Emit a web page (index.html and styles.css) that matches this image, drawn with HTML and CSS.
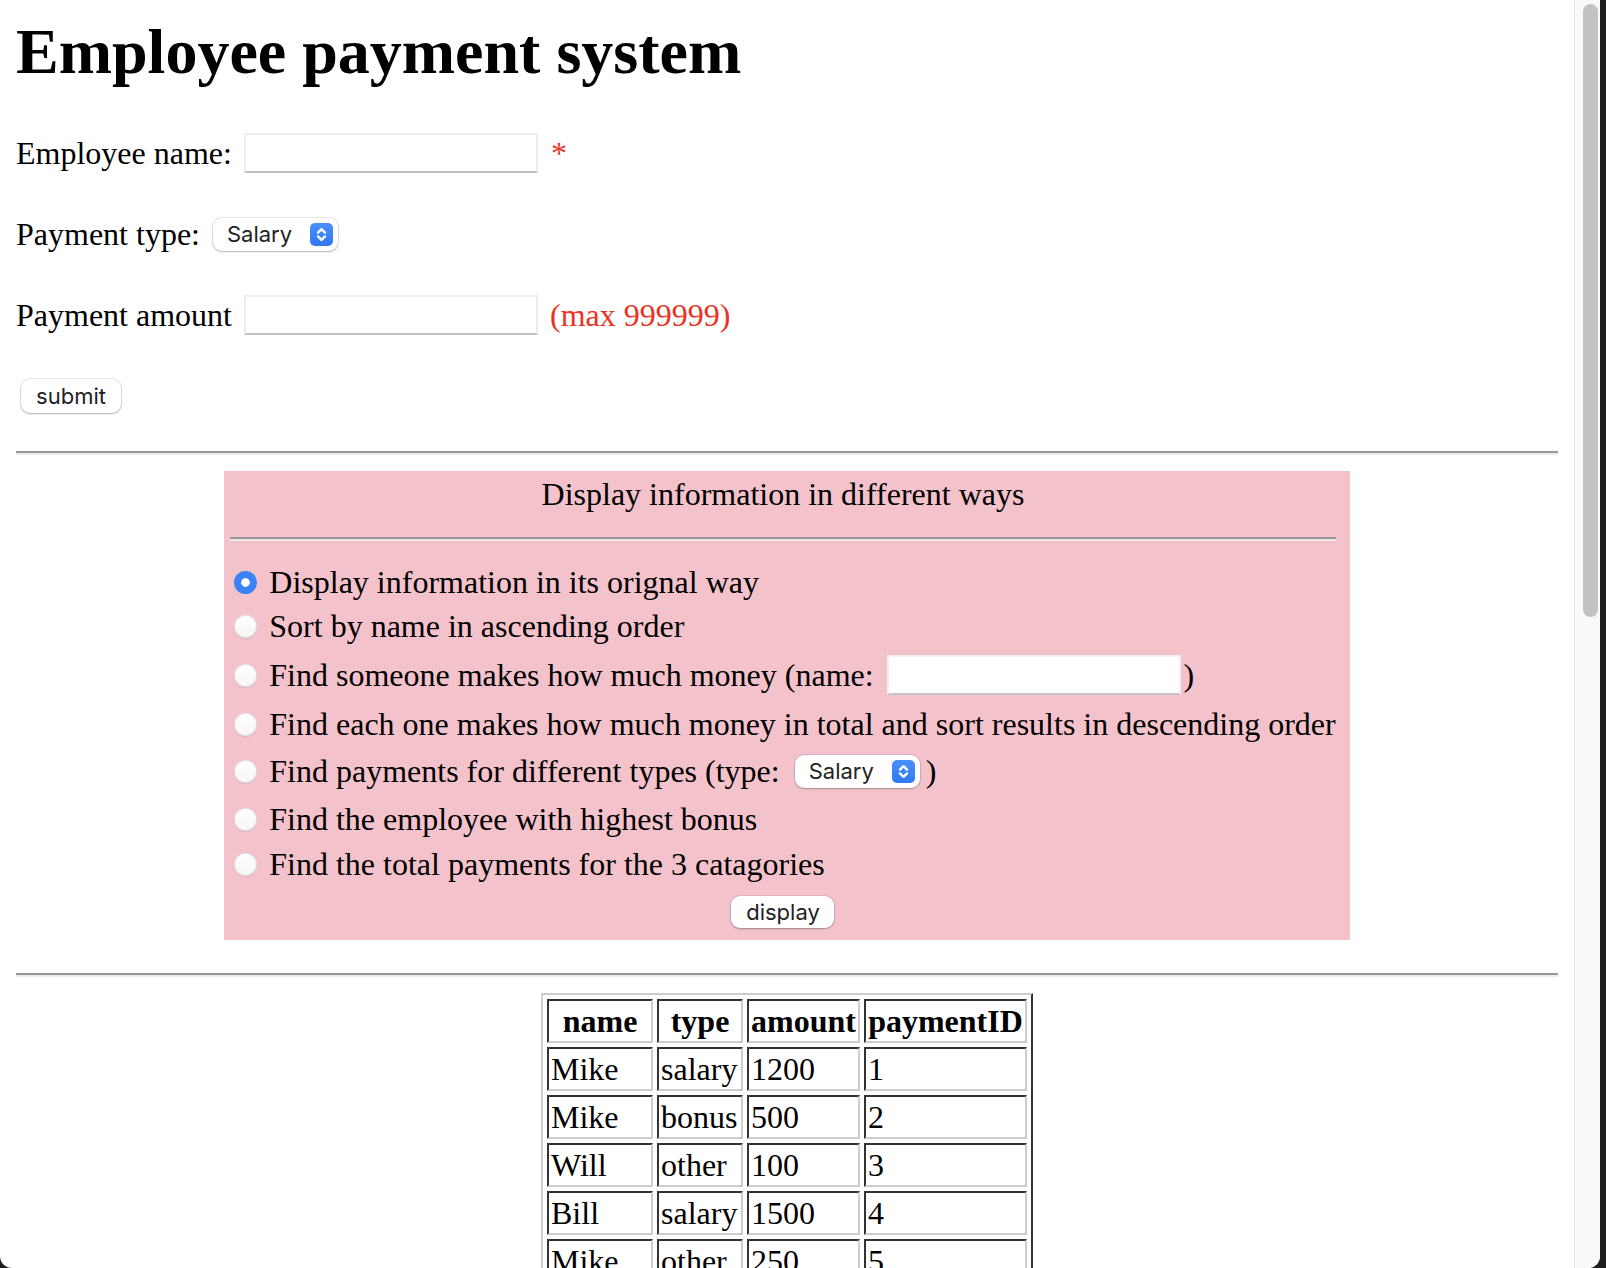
FILE: index.html
```html
<!DOCTYPE html>
<html lang="en">
<head>
<meta charset="utf-8">
<title>Employee payment system</title>
<link rel="stylesheet" href="styles.css">
</head>
<body>
<div class="window">
  <main class="page">
    <h1 class="title">Employee payment system</h1>

    <form class="form">
      <div class="field">
        <span>Employee name:</span>
        <input type="text" class="text-input gap-12">
        <span class="req">*</span>
      </div>
      <div class="field">
        <span>Payment type:</span>
        <div class="select gap-13"><span>Salary</span><span class="select-arrow"><svg width="23" height="23" viewBox="0 0 23 23"><path d="M8 9.6 L11.5 6.2 L15 9.6" fill="none" stroke="#fff" stroke-width="2.4" stroke-linecap="round" stroke-linejoin="round"/><path d="M8 13.4 L11.5 16.8 L15 13.4" fill="none" stroke="#fff" stroke-width="2.4" stroke-linecap="round" stroke-linejoin="round"/></svg></span></div>
      </div>
      <div class="field">
        <span>Payment amount</span>
        <input type="text" class="text-input gap-12">
        <span class="hint">(max 999999)</span>
      </div>
      <div class="field">
        <button type="button" class="btn btn-submit">submit</button>
      </div>
    </form>

    <hr class="rule rule-top">

    <section class="panel">
      <div class="panel-title">Display information in different ways</div>
      <hr class="rule rule-panel">
      <div class="options">
        <label class="opt h44"><input type="radio" name="mode" class="radio" checked><span>Display information in its orignal way</span></label>
        <label class="opt h44"><input type="radio" name="mode" class="radio"><span>Sort by name in ascending order</span></label>
        <label class="opt h54"><input type="radio" name="mode" class="radio"><span>Find someone makes how much money (name:</span><input type="text" class="text-input panel-input"><span class="close-paren">)</span></label>
        <label class="opt h44"><input type="radio" name="mode" class="radio"><span>Find each one makes how much money in total and sort results in descending order</span></label>
        <label class="opt h50"><input type="radio" name="mode" class="radio"><span>Find payments for different types (type:</span><div class="select panel-select"><span>Salary</span><span class="select-arrow"><svg width="23" height="23" viewBox="0 0 23 23"><path d="M8 9.6 L11.5 6.2 L15 9.6" fill="none" stroke="#fff" stroke-width="2.4" stroke-linecap="round" stroke-linejoin="round"/><path d="M8 13.4 L11.5 16.8 L15 13.4" fill="none" stroke="#fff" stroke-width="2.4" stroke-linecap="round" stroke-linejoin="round"/></svg></span></div><span class="close-paren2">)</span></label>
        <label class="opt h46"><input type="radio" name="mode" class="radio"><span>Find the employee with highest bonus</span></label>
        <label class="opt h44"><input type="radio" name="mode" class="radio"><span>Find the total payments for the 3 catagories</span></label>
      </div>
      <div class="panel-actions">
        <button type="button" class="btn btn-display">display</button>
      </div>
    </section>

    <hr class="rule rule-bottom">

    <table class="data">
      <thead>
        <tr><th class="c-name">name</th><th class="c-type">type</th><th class="c-amount">amount</th><th class="c-id">paymentID</th></tr>
      </thead>
      <tbody>
        <tr><td>Mike</td><td>salary</td><td>1200</td><td>1</td></tr>
        <tr><td>Mike</td><td>bonus</td><td>500</td><td>2</td></tr>
        <tr><td>Will</td><td>other</td><td>100</td><td>3</td></tr>
        <tr><td>Bill</td><td>salary</td><td>1500</td><td>4</td></tr>
        <tr><td>Mike</td><td>other</td><td>250</td><td>5</td></tr>
      </tbody>
    </table>
  </main>
  <div class="scrollbar"><div class="thumb"></div></div>
</div>
</body>
</html>
```

FILE: styles.css
```css
html, body {
  margin: 0;
  padding: 0;
  height: 100%;
  overflow: hidden;
}

body {
  background: #1e1e1e;
  font-family: "Liberation Serif", "Times New Roman", serif;
  color: #000;
}

.window {
  width: 1600px;
  height: 1268px;
  display: flex;
  background: #fff;
  border-radius: 0 0 12px 12px;
  overflow: hidden;
}

.page {
  flex: 1;
  min-width: 0;
  padding: 16px;
  overflow: hidden;
  font-size: 32px;
}

.scrollbar {
  flex: none;
  width: 26px;
  box-sizing: border-box;
  background: #f9f9f9;
  border-left: 1px solid #e6e6e6;
  padding: 4px 2px 0 8px;
}

.thumb {
  height: 613px;
  border-radius: 8px;
  background: #c2c2c2;
}

.title {
  margin: 0;
  font-size: 64px;
  font-weight: bold;
  line-height: 71px;
}

.form {
  margin: 46px 0 0;
  display: flex;
  flex-direction: column;
  gap: 41px;
}

.field {
  display: flex;
  align-items: center;
  height: 40px;
  white-space: nowrap;
}

.gap-12 { margin-left: 12px; }
.gap-13 { margin-left: 13px; }

.text-input {
  box-sizing: border-box;
  width: 294px;
  height: 40px;
  margin-top: 0;
  margin-bottom: 0;
  margin-right: 0;
  padding: 0 6px;
  background: #fff;
  border: 2px solid rgba(0, 0, 0, 0.07);
  border-bottom-color: rgba(0, 0, 0, 0.24);
  border-radius: 0;
  outline: none;
  font: 22px "Inter", sans-serif;
}

.req {
  margin-left: 13px;
  color: #eb3323;
}

.hint {
  margin-left: 12px;
  color: #eb3323;
}

.select {
  box-sizing: border-box;
  width: 125px;
  height: 33px;
  display: flex;
  align-items: center;
  justify-content: space-between;
  padding: 0 5px 0 14px;
  background: #fff;
  border-radius: 9px;
  box-shadow: 0 0 0 1px rgba(0, 0, 0, 0.09), 0 1px 2px rgba(0, 0, 0, 0.22);
  font: 22px "Inter", sans-serif;
  color: #222;
}

.select-arrow {
  width: 23px;
  height: 23px;
  border-radius: 5px;
  background: linear-gradient(#4a90fa, #2f78f2);
  display: flex;
}

.btn {
  box-sizing: border-box;
  margin: 0;
  padding: 0;
  background: #fff;
  border: none;
  border-radius: 9px;
  box-shadow: 0 0 0 1px rgba(0, 0, 0, 0.08), 0 1px 2px rgba(0, 0, 0, 0.25);
  font: 22px "Inter", sans-serif;
  color: #222;
}

.btn-submit {
  width: 100px;
  height: 34px;
  margin-left: 5px;
}

.btn-display {
  width: 103px;
  height: 32px;
}

.rule {
  height: 0;
  border: none;
  border-top: 2px solid #999;
  border-bottom: 2px solid #ececec;
  margin: 0;
}

.rule-top { margin-top: 35px; }

.rule-bottom { margin-top: 33px; }

.panel {
  width: fit-content;
  margin: 16px auto 0;
  padding: 0 14px 12px 6px;
  background: #f4c2cb;
  white-space: nowrap;
}

.panel-title {
  padding-top: 5px;
  line-height: 37px;
  text-align: center;
}

.rule-panel {
  margin-top: 24px;
  border-bottom-color: #f0e4e6;
}

.options {
  margin-top: 19px;
}

.opt {
  display: flex;
  align-items: center;
}

.h44 { height: 44px; }
.h46 { height: 46px; }
.h50 { height: 50px; }
.h54 { height: 54px; }

.radio {
  appearance: none;
  -webkit-appearance: none;
  flex: none;
  width: 23px;
  height: 23px;
  margin: 0 12px 0 4px;
  border-radius: 50%;
  background: linear-gradient(#ffffff, #f6f6f6);
  box-shadow: inset 0 0 0 1px rgba(0, 0, 0, 0.1), 0 1px 1px rgba(0, 0, 0, 0.08);
}

.radio:checked {
  background: radial-gradient(circle, #fff 0 4px, #3a82f7 4.6px);
  box-shadow: none;
}

.panel-input {
  margin-left: 13px;
  border-color: rgba(0, 0, 0, 0.05);
  border-bottom-color: rgba(0, 0, 0, 0.22);
}

.close-paren { margin-left: 3px; }

.panel-select { margin-left: 15px; }

.close-paren2 { margin-left: 6px; }

.panel-actions {
  margin-top: 10px;
  display: flex;
  justify-content: center;
}

.data {
  margin: 16px auto 0;
  border-collapse: separate;
  border-spacing: 4px;
  border: 2px solid;
  border-color: #cdcdcd #333 #333 #cdcdcd;
  font-size: 32px;
  line-height: 36px;
}

.data th,
.data td {
  padding: 2px;
  border: 2px solid;
  border-color: #333 #cdcdcd #cdcdcd #333;
  vertical-align: middle;
}

.data th {
  font-weight: bold;
  text-align: center;
}

.data td {
  text-align: left;
}

.c-name { width: 98px; }
.c-type { width: 78px; }
.c-amount { width: 105px; }
.c-id { width: 155px; }
```
